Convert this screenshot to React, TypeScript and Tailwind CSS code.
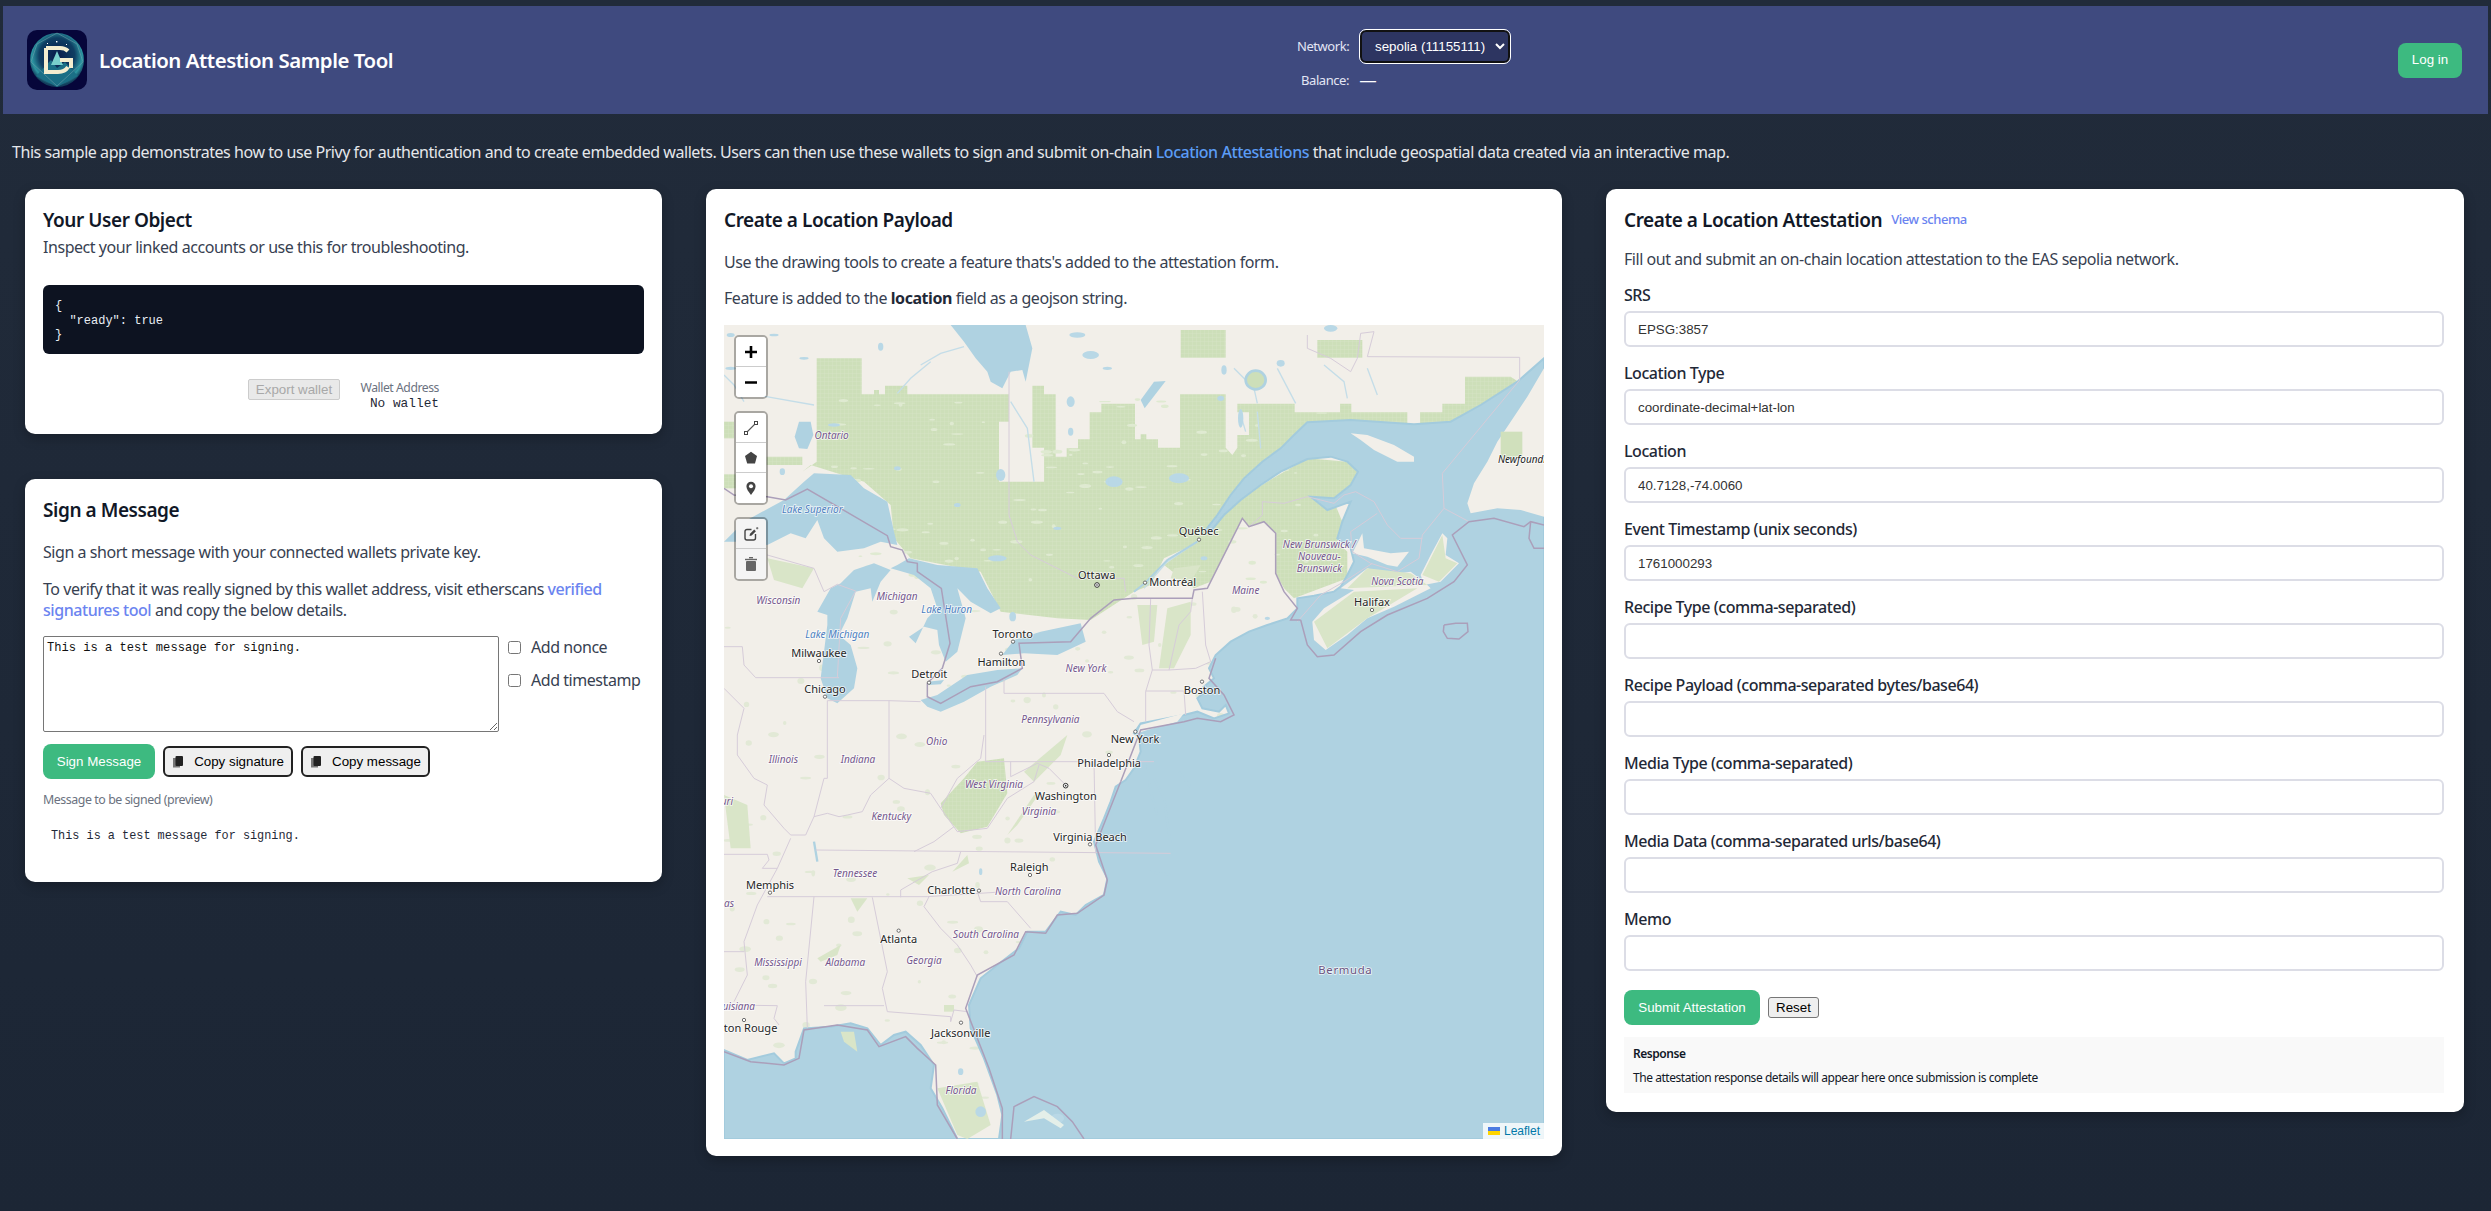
import React from 'react';

// All map geometry is in 3x map pixels (2460 x 2442 viewBox)
const OCEAN =
  'M2460,100 L2380,170 L2270,240 L2180,290 L2070,298 L1880,285 L1750,292 L1710,330 L1670,370 L1615,410 L1560,460 L1520,510 L1480,570 L1445,615 L1455,625 L1500,570 L1550,525 L1610,480 L1670,440 L1750,402 L1820,395 L1870,410 L1902,440 L1880,480 L1830,520 L1760,515 L1810,555 L1880,530 L1855,590 L1840,640 L1880,670 L1890,710 L1870,750 L1850,785 L1830,800 L1770,812 L1720,820 L1720,850 L1690,880 L1630,900 L1575,920 L1520,950 L1475,990 L1455,1030 L1470,1060 L1440,1085 L1455,1090 L1420,1120 L1435,1150 L1485,1160 L1505,1140 L1515,1165 L1470,1180 L1420,1160 L1380,1170 L1250,1195 L1230,1225 L1245,1235 L1250,1280 L1230,1330 L1205,1365 L1175,1385 L1160,1430 L1140,1480 L1110,1550 L1125,1610 L1150,1660 L1140,1710 L1085,1740 L1055,1770 L1010,1760 L965,1820 L910,1820 L885,1870 L820,1920 L770,1960 L735,2040 L740,2110 L780,2200 L820,2310 L835,2370 L825,2442 L700,2442 L655,2350 L620,2290 L630,2220 L590,2160 L545,2120 L510,2130 L470,2160 L430,2110 L380,2095 L320,2105 L240,2110 L215,2180 L215,2200 L180,2215 L150,2185 L70,2205 L0,2175 L0,2442 L2460,2442 Z';

const GREEN_NORTH =
  '278,100 413,100 413,208 450,208 450,195 465,195 465,208 483,208 483,182 550,182 550,208 855,208 855,290 825,290 825,470 960,470 960,368 925,368 925,182 960,182 960,208 995,208 995,395 1028,395 1028,370 1062,370 1062,343 1097,343 1097,262 1132,262 1132,236 1233,236 1233,343 1250,343 1250,328 1267,328 1267,343 1302,343 1302,368 1368,368 1368,208 1505,208 1505,368 1525,390 1540,368 1540,330 1575,330 1575,262 1540,262 1540,236 1712,236 1712,262 1848,262 1848,236 1882,236 1882,262 2050,262 2050,320 2088,320 2088,262 2155,262 2155,236 2223,236 2223,155 2360,155 2390,175 2300,300 1800,320 1600,480 1450,640 1320,700 1280,780 1230,800 1100,885 1000,880 830,860 770,740 560,700 510,640 500,540 420,470 260,420 235,440 278,410';

const GREEN_GASPE =
  '1410,790 1320,720 1430,640 1530,530 1630,470 1750,400 1870,410 1900,440 1870,500 1830,530 1855,590 1840,650 1870,680 1870,760 1710,820 1680,790 1655,745 1655,625 1620,590 1575,605 1555,580 1490,710 1460,770';

const LAKES = [
  '680,0 720,50 755,100 790,140 800,170 835,190 860,140 895,135 905,170 925,70 905,0',
  '0,650 60,590 180,525 240,470 270,445 380,450 420,490 490,530 510,620 520,660 470,650 420,670 340,680 300,640 280,585 245,640 200,625 130,660 60,650',
  '500,735 450,715 390,735 350,775 320,790 280,860 310,870 310,900 300,980 290,1060 310,1120 340,1135 390,1090 400,1030 380,960 345,930 370,880 395,800 440,790 445,830 470,770',
  '555,700 640,720 760,730 790,790 830,850 800,865 740,830 700,790 725,880 700,980 665,1010 645,960 640,915 600,905 555,935 575,955 610,880 640,850 620,790 570,750 500,730 520,720',
  '590,1125 640,1110 730,1050 820,1035 895,1030 880,1050 800,1085 720,1130 650,1160 610,1145',
  '835,990 870,945 950,920 1070,895 1085,950 1000,990 900,985',
  '610,1070 660,1065 650,1078 615,1080',
  '225,290 260,290 268,330 250,372 225,370 212,335',
  '1250,225 1290,170 1325,168 1262,250',
];

const LAND_ON_OCEAN = [
  '2460,130 2410,215 2360,290 2320,350 2290,410 2250,475 2230,535 2240,565 2320,550 2390,555 2460,575',
  '1880,325 1930,330 2010,360 2070,395 2070,410 2020,410 1950,375 1910,345',
  '1765,890 1800,850 1890,795 1850,790 1930,730 1990,750 2060,740 2100,770 2120,790 2010,845 1930,880 1870,930 1805,975 1770,945',
  '2090,750 2120,690 2155,625 2170,640 2165,690 2205,715 2150,770 2100,780',
  '1885,685 1915,625 1920,670 2000,685 2055,680 2020,725 1990,720 1930,695',
  '1250,1200 1380,1165 1360,1190 1270,1215 1240,1225',
];

const GREEN_PATCHES = [
  '1370,15 1505,15 1505,98 1370,98',
  '1780,45 1915,45 1915,98 1780,98',
  '2330,320 2395,320 2395,400 2330,400',
  '128,395 235,395 235,420 128,420',
  '0,290 30,290 30,340 0,340',
  '0,448 35,448 35,490 0,490',
  '650,1435 720,1360 760,1310 840,1300 850,1405 790,1505 710,1525 660,1470',
];

const PALE_PATCHES = [
  '130,700 270,730 235,790 150,765',
  '1240,840 1300,840 1290,950 1255,960',
  '1330,850 1400,830 1400,930 1350,1030 1305,1030',
  '1900,1560 1960,1640 1840,1700',
  '1770,890 1890,800 2080,790 1930,880 1810,970',
  '1930,730 2060,745 2110,780 1870,790',
  '2095,750 2155,630 2165,700 2200,715 2145,770',
  '850,1530 930,1410 950,1400 880,1500',
  '900,1340 1030,1230 1010,1290 930,1370',
  '0,1410 70,1440 80,1570 20,1570',
  '550,1660 615,1650 585,1680',
  '685,1640 730,1590 735,1615',
  '380,1720 430,1720 400,1760',
  '280,1900 350,1860 340,1890 290,1910',
  '350,2120 390,2120 400,2180 360,2150',
  '660,2040 690,2040 690,2060 660,2060',
  '640,2290 760,2270 800,2400 730,2442 700,2430',
  '1430,720 1400,770 1340,760 1350,730',
];

const THICK_BORDERS = [
  '0,490 30,510 130,515 185,525 250,492 490,632 500,665 535,675 550,710 580,715 580,740 652,790 678,955 655,1030 610,1075 610,1115 650,1135 740,1085 820,1070 895,1030 885,955 1040,950 1100,880 1170,825 1230,820 1405,820 1410,795 1450,790 1490,710 1555,580 1575,605 1620,590 1655,625 1655,745 1680,800 1720,850 1700,885 1730,885',
  '1730,885 1750,960 1780,995 1830,990 1910,920 1990,870 2110,820 2190,770 2230,720 2185,630 2235,590 2310,580 2400,605 2420,590 2460,600',
  '2460,670 2430,670 2415,640 2420,590',
  '2160,900 2195,895 2230,895 2232,920 2205,942 2170,940 2158,920 2160,900',
  '1190,1370 1115,1560 1150,1665 1140,1710 1060,1765 1000,1770 965,1825 905,1820 870,1890 760,1950 725,2050 795,2230 835,2350 835,2442',
  '700,2442 640,2340 635,2220 580,2170 545,2135 465,2165 430,2115 340,2100 240,2115 225,2200 180,2220 80,2210 0,2180',
  '860,2442 870,2345 930,2315 1000,2345 1045,2390 1080,2442',
  '1475,1000 1455,1060 1500,1110 1530,1170 1490,1190 1420,1180 1380,1190 1250,1215 1190,1370',
];

const THIN_BORDERS = [
  '0,965 55,965 60,1020 95,1058 345,1058',
  '310,1127 495,1127 590,1130',
  '310,1127 310,1360 300,1360 270,1475',
  '495,1127 495,1360 440,1410 415,1460 370,1470 345,1475 310,1465 270,1475 245,1530 200,1530 180,1510 120,1440 130,1380 90,1360 40,1290 40,1230 60,1150 0,1090',
  '785,1085 785,1310 1290,1310',
  '840,1060 840,1105 1140,1105 1180,1160 1230,1190',
  '130,690 270,730 300,800 340,778 395,798 350,880 340,1058',
  '855,140 855,570 880,650 920,690 1030,745 1060,760 1200,760 1205,800',
  '1750,30 1750,70 1820,100 1880,140 1900,100 1910,25 1950,20 1930,95 2387,97 2387,165',
  '1280,820 1275,960 1285,1035 1265,1100 1265,1190',
  '1435,800 1445,960 1460,1010 1415,1030 1335,1035 1365,900 1400,860 1405,820',
  '1285,1035 1335,1035',
  '1265,1098 1380,1098 1385,1170',
  '1615,530 1680,535 1750,515 1830,535 1860,510 1895,500 1950,530 1990,600 2030,640 2095,640',
  '1615,530 1615,570 1575,605',
  '2387,165 2155,445 2160,550 2095,630 2085,700 2020,740 1940,715 1885,680 1880,620 1960,565',
  '2160,550 2235,590',
  '1720,890 1790,810 1860,770 1945,715',
  '0,1588 130,1588 135,1605 115,1630 160,1630',
  '275,1575 1340,1585',
  '130,1715 610,1715 845,1700',
  '270,1715 245,1970 250,2110',
  '445,1717 490,1940 475,1990 490,2060 680,2075 680,2090 690,2055 730,2060',
  '300,2042 480,2042',
  '0,2040 160,2042 150,2080 165,2100',
  '0,1880 60,1880',
  '200,1540 160,1630 100,1740 60,1850 70,1950 30,2030',
  '860,1310 860,1355 940,1315 975,1330 1025,1380',
  '650,1450 700,1520 790,1510 850,1420 930,1370 945,1320',
  '495,1360 540,1390 620,1405 650,1450',
  '570,1580 630,1550 690,1505',
  '710,1580 700,1615 625,1640 530,1695 530,1717',
  '615,1715 600,1745 650,1810 700,1860 740,1920 760,1955',
  '760,1700 770,1730 850,1730 920,1810',
  '780,1230 770,1300 700,1360 650,1450',
  '1110,1310 1115,1585',
];

const RIVERS = [
  '590,120 650,85 720,65',
  '620,110 560,160 520,205',
  '1420,650 1330,710 1260,790',
  '1530,130 1590,190 1600,235',
  '1660,130 1715,235',
  '1800,120 1860,170 1870,220',
  '1930,130 1960,210',
  '0,150 30,180 60,230',
  '100,210 270,240',
  '860,230 910,310 930,470',
  '1550,270 1565,320',
  '1600,260 1610,370',
];

const BAYS = [
  '1290,1360 1320,1420 1330,1490 1340,1560',
  '1365,1340 1400,1385',
  '1270,1310 1280,1400 1300,1470',
  '1270,1640 1340,1650',
  '270,1550 280,1610',
];

const SPECKS: [number, number, number, number][] = [
  [470, 65, 8, 12], [1100, 90, 25, 12], [1040, 230, 12, 16], [330, 300, 18, 5], [240, 100, 14, 4], [20, 130, 16, 5],
  [1060, 30, 24, 8], [1040, 320, 8, 12], [830, 450, 14, 18], [820, 700, 28, 9], [520, 430, 10, 6],
  [1170, 470, 26, 16], [1150, 130, 14, 5], [175, 440, 8, 10], [1365, 460, 30, 15], [1550, 280, 8, 28], [1490, 220, 10, 8],
  [1670, 115, 12, 10], [1500, 135, 8, 14], [866, 875, 10, 14], [1000, 610, 12, 5], [700, 540, 10, 6], [1820, 10, 20, 10],
  [20, 30, 12, 6], [150, 30, 14, 4], [770, 1640, 5, 10], [1000, 2380, 20, 14], [770, 2360, 16, 16], [710, 2240, 8, 10],
  [1440, 700, 10, 6], [1630, 880, 8, 5],
];

// Deterministic scatter for the small woodland flecks
const rand = (n: number) => {
  const v = Math.sin(n * 127.1) * 43758.5453;
  return v - Math.floor(v);
};
const FLECKS = Array.from({ length: 190 }).map((_, i) => ({
  x: rand(i + 1) * 1800,
  y: 720 + rand(i + 400) * 1700,
  rx: 5 + rand(i + 800) * 13,
  ry: 3 + rand(i + 1200) * 7,
}));
const FOREST_FLECKS = Array.from({ length: 110 }).map((_, i) => ({
  x: 300 + rand(i + 1600) * 1500,
  y: 220 + rand(i + 2000) * 560,
  rx: 5 + rand(i + 2400) * 14,
  ry: 2 + rand(i + 2800) * 4,
}));

type Kind = 'city' | 'state' | 'water' | 'country' | 'nf';

const LABELS: [string, number, number, Kind, ('middle' | 'start' | 'end')?][] = [
  ['Ontario', 323, 342, 'state'],
  ['Lake Superior', 265, 563, 'water'],
  ['Wisconsin', 163, 836, 'state'],
  ['Michigan', 519, 824, 'state'],
  ['Lake Huron', 668, 864, 'water'],
  ['Lake Michigan', 340, 938, 'water'],
  ['Toronto', 866, 938, 'city'],
  ['Milwaukee', 285, 995, 'city'],
  ['Hamilton', 832, 1022, 'city'],
  ['Detroit', 616, 1060, 'city'],
  ['Chicago', 303, 1103, 'city'],
  ['New York', 1086, 1041, 'state'],
  ['Ottawa', 1118, 761, 'city'],
  ['Pennsylvania', 979, 1194, 'state'],
  ['Québec', 1424, 631, 'city'],
  ['Montréal', 1346, 784, 'city'],
  ['New Brunswick /', 1786, 669, 'state'],
  ['Nouveau-', 1786, 705, 'state'],
  ['Brunswick', 1786, 741, 'state'],
  ['Maine', 1565, 808, 'state'],
  ['Nova Scotia', 2020, 781, 'state'],
  ['Halifax', 1944, 842, 'city'],
  ['Boston', 1434, 1106, 'city'],
  ['Newfoundland', 2322, 415, 'nf', 'start'],
  ['Illinois', 178, 1313, 'state'],
  ['Indiana', 402, 1314, 'state'],
  ['Ohio', 638, 1260, 'state'],
  ['West Virginia', 810, 1390, 'state'],
  ['New York', 1160, 1255, 'city', 'start'],
  ['Philadelphia', 1060, 1325, 'city', 'start'],
  ['Kentucky', 502, 1486, 'state'],
  ['Washington', 1025, 1425, 'city'],
  ['Virginia', 945, 1470, 'state'],
  ['Virginia Beach', 1098, 1547, 'city'],
  ['Raleigh', 916, 1637, 'city'],
  ['Tennessee', 393, 1656, 'state'],
  ['Memphis', 138, 1691, 'city'],
  ['Charlotte', 682, 1708, 'city'],
  ['North Carolina', 912, 1711, 'state'],
  ['South Carolina', 786, 1839, 'state'],
  ['Atlanta', 524, 1853, 'city'],
  ['Georgia', 600, 1916, 'state'],
  ['Mississippi', 162, 1923, 'state'],
  ['Alabama', 364, 1923, 'state'],
  ['Louisiana', 93, 2055, 'state', 'end'],
  ['Baton Rouge', 160, 2121, 'city', 'end'],
  ['Jacksonville', 710, 2135, 'city'],
  ['Florida', 711, 2307, 'state'],
  ['Arkansas', 30, 1745, 'state', 'end'],
  ['Missouri', 27, 1440, 'state', 'end'],
  ['Bermuda', 1864, 1948, 'country'],
];

const DOTS: [number, number][] = [
  [867, 950], [831, 986], [285, 1008], [303, 1115], [615, 1073], [1425, 644], [1263, 773], [1944, 855], [1434, 1070],
  [1234, 1220], [1155, 1290], [1098, 1558], [918, 1650], [138, 1703], [765, 1697], [524, 1817], [60, 2085], [711, 2093],
];

const MapDrawing: React.FC = () => {
  const labelFill: Record<Kind, string> = {
    city: '#262626',
    state: '#74568c',
    water: '#4d7fc0',
    country: '#6a5480',
    nf: '#222222',
  };

  return (
    <svg viewBox="0 0 2460 2442" className="block w-full h-full">
      <defs>
        <pattern id="forest" width="12" height="12" patternUnits="userSpaceOnUse">
          <rect width="12" height="12" fill="#cddfb9" />
          <path d="M0 0H12M0 0V12" stroke="#d9e6c8" strokeWidth="2" />
        </pattern>
      </defs>
      <rect width="2460" height="2442" fill="#f2efe9" />
      {FLECKS.map((f, i) => (
        <ellipse key={i} cx={f.x} cy={f.y} rx={f.rx} ry={f.ry} fill="#e2e9d6" />
      ))}
      <polygon points={GREEN_NORTH} fill="url(#forest)" />
      <polygon points={GREEN_GASPE} fill="url(#forest)" />
      {FOREST_FLECKS.map((f, i) => (
        <ellipse key={i} cx={f.x} cy={f.y} rx={f.rx} ry={f.ry} fill="#dfeAd1" />
      ))}
      {RIVERS.map((r, i) => (
        <polyline key={i} points={r} fill="none" stroke="#c4dde8" strokeWidth="4" />
      ))}
      {GREEN_PATCHES.map((p, i) => (
        <polygon key={i} points={p} fill="url(#forest)" />
      ))}
      {PALE_PATCHES.slice(0, 4).map((p, i) => (
        <polygon key={i} points={p} fill="#d9e5c8" />
      ))}
      <path d={OCEAN} fill="#afd2e1" stroke="#a3cbdd" strokeWidth="6" />
      {LAND_ON_OCEAN.map((p, i) => (
        <polygon key={i} points={p} fill="#f2efe9" />
      ))}
      <polygon points={GREEN_PATCHES[2]} fill="#d0e0bc" />
      {PALE_PATCHES.slice(4).map((p, i) => (
        <polygon key={i} points={p} fill="#d9e5c8" />
      ))}
      {LAKES.map((p, i) => (
        <polygon key={i} points={p} fill="#afd2e1" />
      ))}
      {BAYS.map((r, i) => (
        <polyline key={i} points={r} fill="none" stroke="#afd2e1" strokeWidth="7" />
      ))}
      {SPECKS.map(([x, y, rx, ry], i) => (
        <ellipse key={i} cx={x} cy={y} rx={rx} ry={ry} fill="#b9d8e6" />
      ))}
      <ellipse cx="1595" cy="165" rx="30" ry="28" fill="#cddfb9" stroke="#afd2e1" strokeWidth="8" />
      <polyline points="1420,650 1330,705 1262,775 1230,800" fill="none" stroke="#afd2e1" strokeWidth="6" />
      {THIN_BORDERS.map((b, i) => (
        <polyline key={i} points={b} fill="none" stroke="#d6ccd9" strokeWidth="3" />
      ))}
      {THICK_BORDERS.map((b, i) => (
        <polyline key={i} points={b} fill="none" stroke="#ab9fba" strokeWidth="4.5" />
      ))}
      <polygon points="900,2390 960,2355 1020,2400 1010,2410 960,2380" fill="#e4efe9" />
      {DOTS.map(([x, y], i) => (
        <circle key={i} cx={x} cy={y} r="5" fill="#ffffff" stroke="#555555" strokeWidth="2.5" />
      ))}
      <circle cx="1119" cy="780" r="7" fill="#ffffff" stroke="#333333" strokeWidth="3" />
      <circle cx="1119" cy="780" r="2.5" fill="#333333" />
      <circle cx="1025" cy="1382" r="7" fill="#ffffff" stroke="#333333" strokeWidth="3" />
      <circle cx="1025" cy="1382" r="2.5" fill="#333333" />
      {LABELS.map(([text, x, y, kind, anchor], i) => {
        const italic = kind === 'state' || kind === 'water' || kind === 'nf';
        return (
          <text
            key={i}
            x={x}
            y={y}
            textAnchor={anchor ?? 'middle'}
            fontFamily="'Noto Sans', sans-serif"
            fontStyle={italic ? 'italic' : 'normal'}
            fontSize={italic ? 30 : kind === 'country' ? 34 : 33}
            letterSpacing={kind === 'country' ? 2 : 0}
            fill={labelFill[kind]}
            stroke="#ffffff"
            strokeOpacity="0.75"
            strokeWidth="5"
            paintOrder="stroke"
          >
            {text}
          </text>
        );
      })}
    </svg>
  );
};

const ToolButton: React.FC<{ children: React.ReactNode; muted?: boolean; last?: boolean }> = ({ children, muted, last }) => (
  <div
    className={`w-[30px] h-[30px] flex items-center justify-center ${muted ? 'bg-[#f4f4f4]' : 'bg-white'} ${last ? '' : 'border-b border-[#cccccc]'}`}
  >
    {children}
  </div>
);

const ToolBar: React.FC<{ children: React.ReactNode }> = ({ children }) => (
  <div className="w-[34px] border-2 border-[#0000004d] rounded-[5px] bg-clip-padding overflow-hidden">{children}</div>
);

const MapPanel: React.FC = () => (
  <div className="relative w-[820px] h-[814px] overflow-hidden">
    <MapDrawing />
    <div className="absolute left-[10px] top-[10px] flex flex-col gap-[12px]">
      <ToolBar>
        <ToolButton>
          <svg width="16" height="16" viewBox="0 0 16 16"><path d="M2 8h12M8 2v12" stroke="#000" strokeWidth="2.6" /></svg>
        </ToolButton>
        <ToolButton last>
          <svg width="16" height="16" viewBox="0 0 16 16"><path d="M2 8.5h12" stroke="#000" strokeWidth="2.4" /></svg>
        </ToolButton>
      </ToolBar>
      <ToolBar>
        <ToolButton>
          <svg width="16" height="16" viewBox="0 0 16 16" fill="none">
            <path d="M3.5 12.5 12.5 3.5" stroke="#555" strokeWidth="1.1" />
            <rect x="1.5" y="11.5" width="3" height="3" fill="#fff" stroke="#444" />
            <rect x="11.5" y="1.5" width="3" height="3" fill="#fff" stroke="#444" />
          </svg>
        </ToolButton>
        <ToolButton>
          <svg width="16" height="16" viewBox="0 0 16 16"><path d="M8 1.8 14 6l-2 7.4H4.2L2 6Z" fill="#444" /></svg>
        </ToolButton>
        <ToolButton last>
          <svg width="16" height="16" viewBox="0 0 16 16">
            <path d="M8 15C5.5 11.5 3.4 9.2 3.4 6.3a4.6 4.6 0 0 1 9.2 0C12.6 9.2 10.5 11.5 8 15Z" fill="#444" />
            <circle cx="8" cy="6.2" r="2" fill="#fff" />
          </svg>
        </ToolButton>
      </ToolBar>
      <ToolBar>
        <ToolButton muted>
          <svg width="16" height="16" viewBox="0 0 16 16" fill="none">
            <path d="M8.5 3.5H4a2 2 0 0 0-2 2V12a2 2 0 0 0 2 2h6.5a2 2 0 0 0 2-2V8" stroke="#444" strokeWidth="1.4" />
            <path d="m6.5 10 .5-2.2 4.2-4.2 1.7 1.7-4.2 4.2Z" fill="#444" />
            <path d="M14.2 1v2.4M13 2.2h2.4" stroke="#444" strokeWidth=".7" />
          </svg>
        </ToolButton>
        <ToolButton muted last>
          <svg width="16" height="16" viewBox="0 0 16 16" fill="#666">
            <rect x="3" y="5" width="10" height="10" rx="1" />
            <rect x="2" y="2.8" width="12" height="1.4" />
            <rect x="6" y="1" width="4" height="1.4" />
          </svg>
        </ToolButton>
      </ToolBar>
    </div>
    <div className="absolute right-0 bottom-0 w-[61px] h-[16px] bg-[#ffffffcc] flex items-center justify-end pr-[4px] gap-[4px] font-['Liberation_Sans',sans-serif] text-[12px] leading-none text-[#0078a8] tracking-normal">
      <svg width="12" height="8" viewBox="0 0 12 8"><rect width="12" height="4" fill="#4c7be1" /><rect y="4" width="12" height="4" fill="#ffd500" /></svg>
      <span>Leaflet</span>
    </div>
  </div>
);

const Logo: React.FC = () => (
  <svg width="60" height="60" viewBox="0 0 60 60" className="shrink-0 rounded-[10px]">
    <defs>
      <radialGradient id="globe" cx="50%" cy="42%" r="55%">
        <stop offset="0%" stopColor="#081a4a" />
        <stop offset="60%" stopColor="#0f3f63" />
        <stop offset="85%" stopColor="#2c96a2" />
        <stop offset="100%" stopColor="#123e5c" />
      </radialGradient>
    </defs>
    <rect width="60" height="60" fill="#06063a" />
    <circle cx="30" cy="30" r="27" fill="url(#globe)" />
    <path d="M9 46 24 30 30 38 38 32 51 46 30 57Z" fill="#1b6f86" />
    <path d="M30 21 36 35H24Z" fill="#79d0cc" />
    <path d="M10 14 30 3 50 14 56 32 30 56 4 32Z" fill="none" stroke="#7aa7b0" strokeWidth=".5" />
    <path d="M19 18V42H31Q38 42 41 37M19 18H33Q38 18 41 21M33 30H44V38" fill="none" stroke="#f4edcf" strokeWidth="4" />
    <rect x="29" y="11" width="1.4" height="1.4" fill="#fff" />
    <rect x="20" y="13" width="1" height="1" fill="#fff" />
    <rect x="39" y="14" width="1" height="1" fill="#fff" />
  </svg>
);

const CopyIcon: React.FC = () => (
  <svg width="13" height="14" viewBox="0 0 13 14" className="shrink-0">
    <rect x="1" y="3" width="7" height="9.5" fill="#777" />
    <rect x="3.5" y="1" width="7.5" height="10" rx="1" fill="#222" />
  </svg>
);

const Card: React.FC<{ className?: string; children: React.ReactNode }> = ({ className, children }) => (
  <div className={`bg-white rounded-[10px] shadow-[0_4px_12px_rgba(0,0,0,0.25)] p-[18px] ${className ?? ''}`}>{children}</div>
);

const FIELDS: [string, string][] = [
  ['SRS', 'EPSG:3857'],
  ['Location Type', 'coordinate-decimal+lat-lon'],
  ['Location', '40.7128,-74.0060'],
  ['Event Timestamp (unix seconds)', '1761000293'],
  ['Recipe Type (comma-separated)', ''],
  ['Recipe Payload (comma-separated bytes/base64)', ''],
  ['Media Type (comma-separated)', ''],
  ['Media Data (comma-separated urls/base64)', ''],
  ['Memo', ''],
];

const Field: React.FC<{ label: string; value: string }> = ({ label, value }) => (
  <div className="flex flex-col">
    <label className="h-[26px] flex items-center text-[16px] font-medium text-[#1f2937]">{label}</label>
    <input
      readOnly
      value={value}
      className="h-[36px] mt-[3px] px-[12px] border-2 border-[#dcdde6] rounded-[6px] bg-white font-['Liberation_Sans',sans-serif] tracking-normal text-[13.33px] text-[#333333] outline-none"
    />
  </div>
);

export default function App() {
  return (
    <div className="min-h-screen bg-gradient-to-b from-[#212b3a] to-[#1c2635] font-['Noto_Sans',sans-serif] tracking-[-0.028em] text-[#1f2937] pt-[6px] pb-[40px]">
      <header className="mx-[3px] h-[108px] bg-[#3f4a7f] flex items-center justify-between pl-[24px] pr-[26px] relative">
        <div className="flex items-center gap-[12px]">
          <Logo />
          <h1 className="text-[20.4px] font-semibold text-white">Location Attestion Sample Tool</h1>
        </div>
        <div className="absolute left-[1294px] top-[24px] flex flex-col gap-[6px] text-[13px] text-[#e3e6f5]">
          <div className="flex items-center gap-[11px]">
            <span className="w-[52px] text-right">Network:</span>
            <select className="w-[150px] h-[33px] pl-[9px] bg-[#2d3561] text-white border-2 border-[#111111] outline outline-1 outline-white rounded-[6px] font-['Liberation_Sans',sans-serif] tracking-normal text-[13.33px]">
              <option>sepolia (11155111)</option>
            </select>
          </div>
          <div className="flex items-center gap-[11px]">
            <span className="w-[52px] text-right">Balance:</span>
            <span className="text-white font-['Liberation_Sans',sans-serif] text-[16px]">—</span>
          </div>
        </div>
        <button className="w-[64px] h-[35px] rounded-[8px] bg-[#3dba80] text-white font-['Liberation_Sans',sans-serif] tracking-normal text-[13.33px]">
          Log in
        </button>
      </header>

      <p className="text-[16px] text-[#e5e7eb] pl-[12px] mt-[26px] leading-[24px]">
        This sample app demonstrates how to use Privy for authentication and to create embedded wallets. Users can then use these wallets to sign and submit on-chain{' '}
        <a className="text-[#5b9cf5] font-medium">Location Attestations</a> that include geospatial data created via an interactive map.
      </p>

      <main className="flex items-start gap-[44px] pl-[25px] mt-[25px]">
        <div className="w-[637px] flex flex-col gap-[45px]">
          <Card className="h-[245px]">
            <h2 className="text-[19px] font-semibold text-[#111827] leading-[26px]">Your User Object</h2>
            <p className="text-[16px] leading-[24px] mt-[2px] text-[#374151]">Inspect your linked accounts or use this for troubleshooting.</p>
            <pre className="mt-[26px] h-[69px] bg-[#0d1321] rounded-[6px] px-[12px] py-[14px] font-['Liberation_Mono',monospace] tracking-normal text-[12px] leading-[14.5px] text-[#e8eef5]">
              {'{\n  "ready": true\n}'}
            </pre>
            <div className="flex items-start mt-[25px] ml-[205px] gap-[20px]">
              <button disabled className="w-[92px] h-[21px] bg-[#e9e9e9] border border-[#cccccc] rounded-[2px] text-[#a8a8a8] font-['Liberation_Sans',sans-serif] tracking-normal text-[13.33px] leading-none">
                Export wallet
              </button>
              <div className="w-[79px] flex flex-col items-end">
                <span className="text-[12.2px] leading-[17px] text-[#6b7280]">Wallet Address</span>
                <span className="font-['Liberation_Mono',monospace] tracking-normal text-[12.8px] leading-[15px] text-[#1f2937]">No wallet</span>
              </div>
            </div>
          </Card>

          <Card className="h-[403px]">
            <h2 className="text-[19px] font-semibold text-[#111827] leading-[26px]">Sign a Message</h2>
            <p className="text-[16px] leading-[21px] mt-[19px] text-[#374151]">Sign a short message with your connected wallets private key.</p>
            <p className="text-[16px] leading-[21px] mt-[16px] text-[#374151]">
              To verify that it was really signed by this wallet address, visit etherscans <a className="text-[#6b84f0] font-medium">verified signatures tool</a> and copy the below details.
            </p>
            <div className="flex items-start mt-[15px]">
              <textarea
                readOnly
                value="This is a test message for signing."
                className="w-[456px] h-[96px] border border-[#767676] rounded-[2px] px-[3px] py-[2px] font-['Liberation_Mono',monospace] tracking-normal text-[12.1px] text-[#111111] resize"
              />
              <div className="flex flex-col ml-[9px] gap-[11px]">
                <label className="flex items-center gap-[10px] h-[22px] text-[16px] text-[#374151]">
                  <input type="checkbox" className="w-[13px] h-[13px] m-0" />
                  Add nonce
                </label>
                <label className="flex items-center gap-[10px] h-[22px] text-[16px] text-[#374151]">
                  <input type="checkbox" className="w-[13px] h-[13px] m-0" />
                  Add timestamp
                </label>
              </div>
            </div>
            <div className="flex items-center mt-[12px] font-['Liberation_Sans',sans-serif] tracking-normal text-[13.33px]">
              <button className="w-[112px] h-[35px] rounded-[8px] bg-[#3dba80] text-white">Sign Message</button>
              <button className="ml-[8px] w-[130px] h-[31px] flex items-center justify-center gap-[9px] bg-[#efefef] border-2 border-[#222222] rounded-[6px] text-black">
                <CopyIcon />
                Copy signature
              </button>
              <button className="ml-[8px] w-[129px] h-[31px] flex items-center justify-center gap-[9px] bg-[#efefef] border-2 border-[#222222] rounded-[6px] text-black">
                <CopyIcon />
                Copy message
              </button>
            </div>
            <p className="text-[12.4px] leading-[16px] mt-[13px] text-[#6b7280]">Message to be signed (preview)</p>
            <pre className="font-['Liberation_Mono',monospace] tracking-normal text-[11.85px] leading-[16px] text-[#1f2937] mt-[20px] ml-[8px]">This is a test message for signing.</pre>
          </Card>
        </div>

        <Card className="w-[856px] h-[967px]">
          <h2 className="text-[19px] font-semibold text-[#111827] leading-[26px]">Create a Location Payload</h2>
          <p className="text-[16px] leading-[21px] mt-[19px] text-[#374151]">Use the drawing tools to create a feature thats's added to the attestation form.</p>
          <p className="text-[16px] leading-[21px] mt-[15px] text-[#374151]">
            Feature is added to the <b className="font-bold text-[#1f2937]">location</b> field as a geojson string.
          </p>
          <div className="mt-[16px]">
            <MapPanel />
          </div>
        </Card>

        <Card className="w-[858px] h-[923px] pr-[20px]">
          <div className="flex items-center gap-[9px] h-[26px]">
            <h2 className="text-[19px] font-semibold text-[#111827]">Create a Location Attestation</h2>
            <a className="text-[13px] font-medium text-[#6b84f0]">View schema</a>
          </div>
          <p className="text-[16px] leading-[21px] mt-[16px] text-[#374151]">Fill out and submit an on-chain location attestation to the EAS sepolia network.</p>
          <div className="flex flex-col gap-[13px] mt-[12px]">
            {FIELDS.map(([label, value]) => (
              <Field key={label} label={label} value={value} />
            ))}
          </div>
          <div className="flex items-center mt-[19px] font-['Liberation_Sans',sans-serif] tracking-normal text-[13.33px]">
            <button className="w-[136px] h-[35px] rounded-[8px] bg-[#3dba80] text-white">Submit Attestation</button>
            <button className="ml-[8px] w-[51px] h-[21px] bg-[#efefef] border border-[#767676] rounded-[3px] text-black leading-none">Reset</button>
          </div>
          <div className="mt-[12px] h-[56px] bg-[#f9f9f9] px-[9px] pt-[9px] text-[#111827]">
            <div className="text-[12px] font-semibold leading-[16px]">Response</div>
            <div className="text-[12px] leading-[16px] mt-[8px]">The attestation response details will appear here once submission is complete</div>
          </div>
        </Card>
      </main>
    </div>
  );
}
